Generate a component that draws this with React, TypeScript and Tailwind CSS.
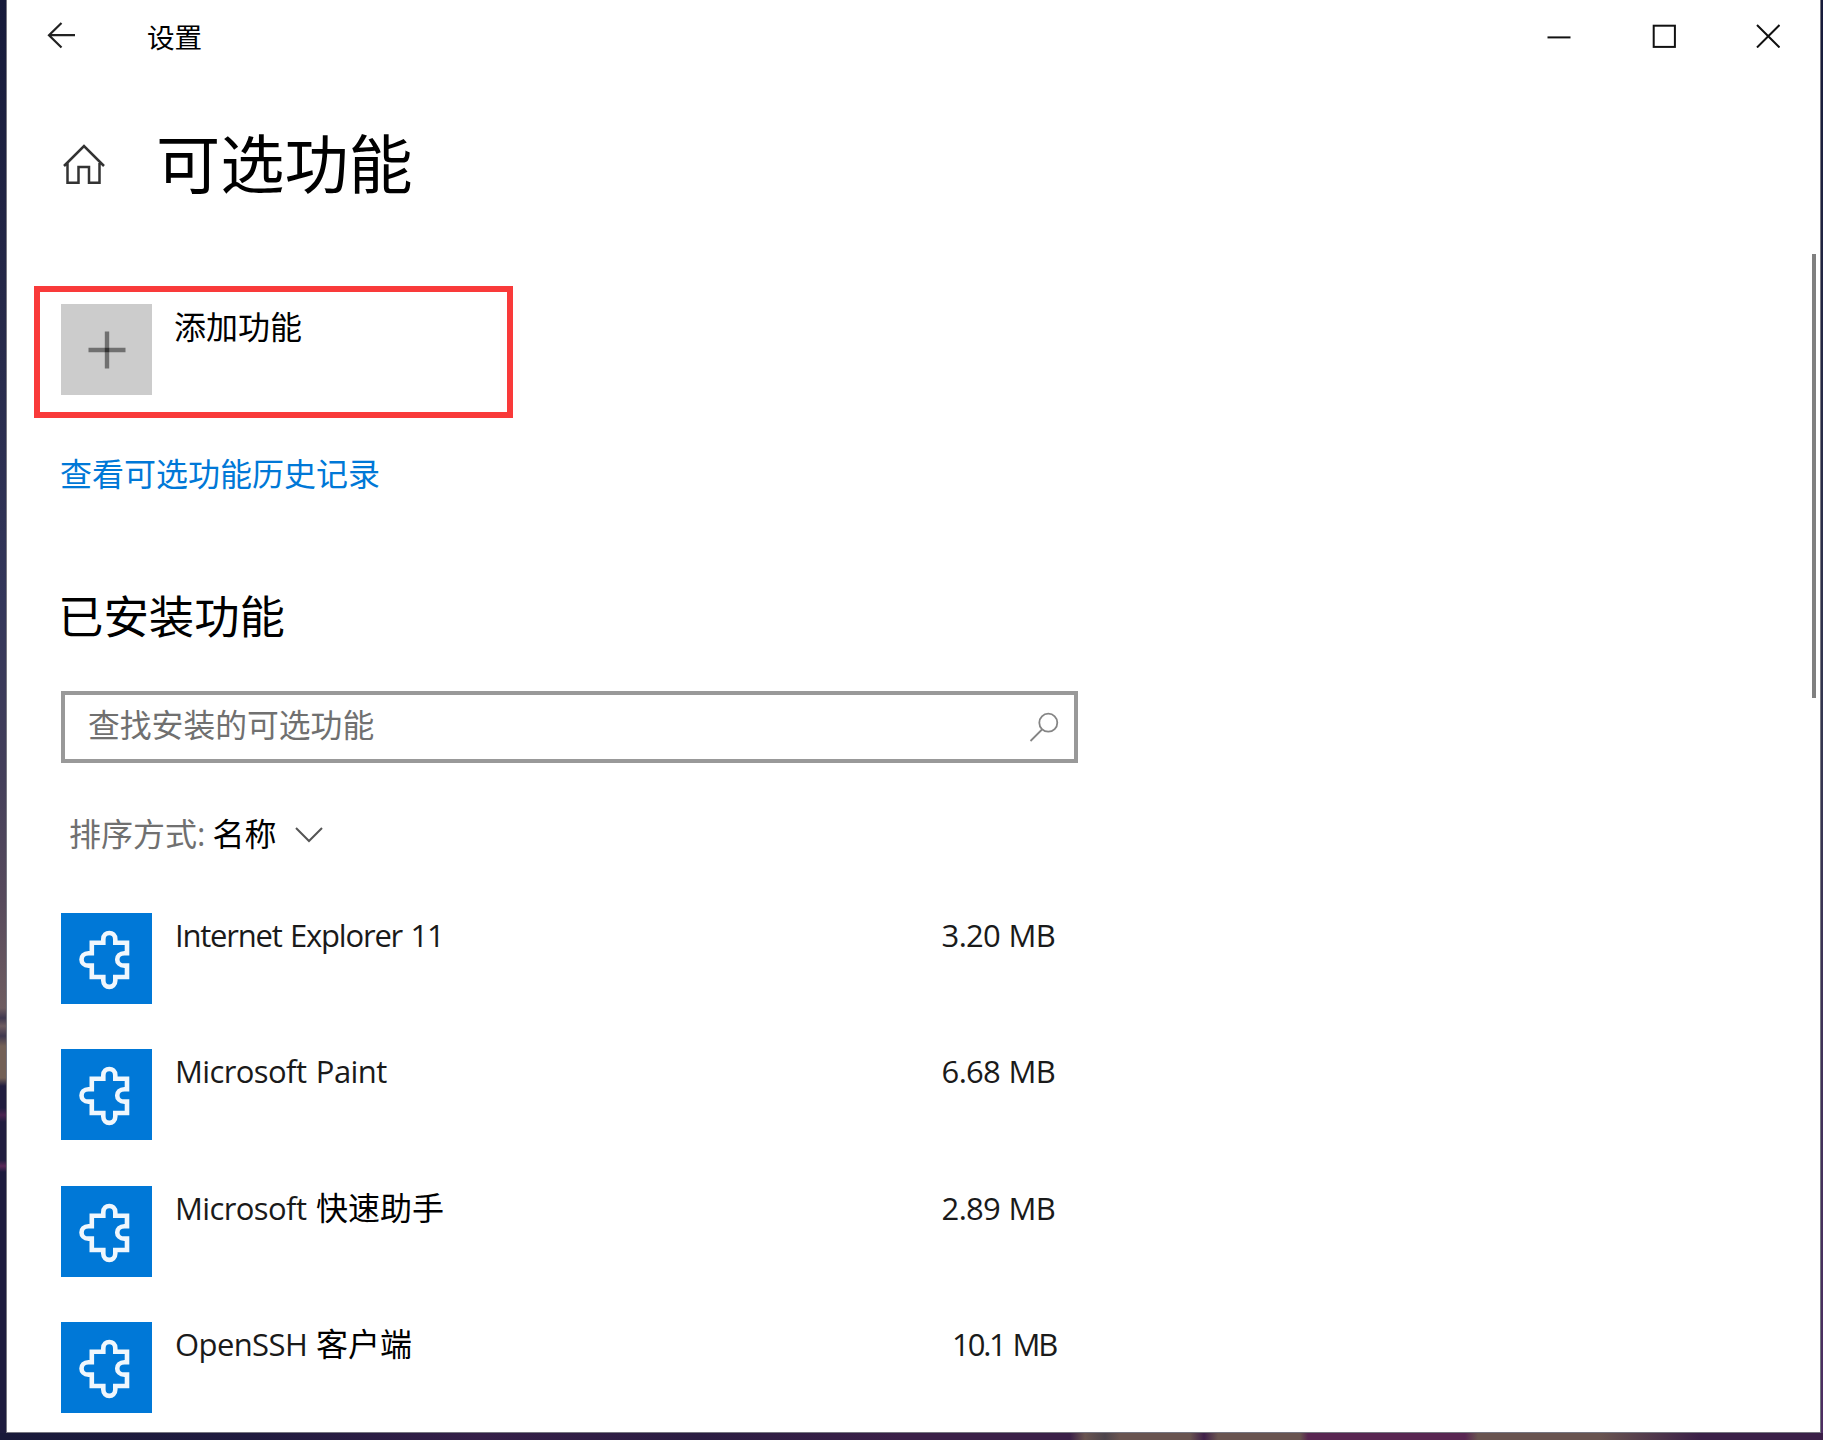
import React from 'react';

const features = [
  { name: 'Internet Explorer 11', cjk: '', size: '3.20 MB', nameClass: 'w-[270px] tracking-[-1.2px] [word-spacing:1.5px]', sizeClass: 'tracking-[-0.7px] [word-spacing:1px]' },
  { name: 'Microsoft Paint', cjk: '', size: '6.68 MB', nameClass: 'w-[214px] tracking-[-0.6px] [word-spacing:2px]', sizeClass: 'tracking-[-0.7px] [word-spacing:1px]' },
  { name: 'Microsoft', cjk: '快速助手', size: '2.89 MB', nameClass: 'w-[132px] tracking-[-0.6px]', sizeClass: 'tracking-[-0.7px] [word-spacing:1px]' },
  { name: 'OpenSSH', cjk: '客户端', size: '10.1 MB', nameClass: 'w-[132px] tracking-[-0.6px]', sizeClass: 'mr-[-1px] tracking-[-2.2px] [word-spacing:2px]' },
];

function PuzzleIcon() {
  return (
    <svg width="91" height="91" viewBox="0 0 91 91" fill="none" stroke="#f0f7fd" strokeWidth="4.6">
      <path d="M30.8 29.8H42.3V26.3C42.3 17.8 54.3 17.8 54.3 26.3V29.8H66V40.2H63.5C53.8 40.2 53.8 52.6 63.5 52.6H66V64H54.3V67.5C54.3 76 42.3 76 42.3 67.5V64H30.8V52.6H27.5C18.2 52.6 18.2 40.2 27.5 40.2H30.8Z" />
    </svg>
  );
}

function TitleBar() {
  return (
    <header className="flex h-[72px] items-start">
      <button className="mt-[22px] ml-10 h-7 w-7">
        <svg width="28" height="28" viewBox="0 0 28 28" fill="none" stroke="#222" strokeWidth="2.2">
          <path d="M28 13.2H2M14.5 1L2 13.2L14.5 25.5" />
        </svg>
      </button>
      <span className="mt-[17px] ml-[72px] text-[27.6px] leading-10 text-black">设置</span>
      <div className="mt-[24px] mr-[40px] ml-auto flex gap-[80.5px]">
        <svg width="24" height="24" viewBox="0 0 24 24" fill="none" stroke="#111" strokeWidth="2">
          <path d="M0.5 13.4H23.5" />
        </svg>
        <svg width="24" height="24" viewBox="0 0 24 24" fill="none" stroke="#111" strokeWidth="2">
          <rect x="1.7" y="1.7" width="21.2" height="21.2" />
        </svg>
        <svg width="24" height="24" viewBox="0 0 24 24" fill="none" stroke="#111" strokeWidth="2">
          <path d="M1 1L23.5 23.5M23.5 1L1 23.5" />
        </svg>
      </div>
    </header>
  );
}

export default function App() {
  return (
    <div className="h-[1440px] w-[1823px] overflow-hidden font-['Open_Sans','Noto_Sans_CJK_SC',sans-serif]">
      <div className="flex h-[1433px] bg-[linear-gradient(180deg,#161a3a,#343650_50%,#4d2d62)]">
        <div className="w-1.5 shrink-0 bg-[linear-gradient(180deg,#161a3a_0px,#252848_300px,#33365a_600px,#443f5a_780px,#574a5c_900px,#6e5c60_1008px,#40384f_1018px,#6e5c60_1026px,#40384f_1036px,#736056_1046px,#736056_1078px,#211d3f_1086px,#211d3f_1108px,#4b2350_1115px,#211d3f_1122px,#211d3f_1160px,#5a2858_1166px,#1d1b3e_1172px,#1d1b3e_1440px)]" />
        <main className="relative w-[1815px] shrink-0 border-r border-b border-l border-[#777781] bg-white">
          <TitleBar />

          <div className="flex h-[188px] items-start">
            <svg className="mt-[72px] ml-14" width="42" height="42" viewBox="0 0 42 42" fill="none" stroke="#333" strokeWidth="2.5">
              <path d="M1 22L21 2L41 22M4.5 19V38.8H15.5V23H26V38.8H36.5V19" />
            </svg>
            <h1 className="mt-[44.5px] ml-[51px] text-[64.2px] leading-[92px] text-black">可选功能</h1>
          </div>

          <section className="mt-[26px] ml-[27px] flex h-[132px] w-[479px] items-start border-[6.5px] border-[#f93a3a]">
            <div className="mt-[12px] ml-[21px] flex h-[91px] w-[91px] items-center justify-center bg-[#cccccc]">
              <svg width="38" height="38" viewBox="0 0 38 38" stroke="#707070" strokeWidth="4.4">
                <path d="M0.5 19H37.5" />
                <path d="M19 0.5V37.5" />
                <rect x="16.8" y="16.8" width="4.4" height="4.4" fill="#333" stroke="none" />
              </svg>
            </div>
            <span className="mt-[12px] ml-[22px] text-[32px] leading-[46px] text-black">添加功能</span>
          </section>

          <a className="mt-[33px] ml-[53px] block h-[47px] text-[32px] leading-[46px] text-[#0078d7]">查看可选功能历史记录</a>

          <h2 className="mt-[85px] ml-[51px] h-[67px] text-[45.4px] leading-[66px] text-black">已安装功能</h2>

          <div className="mt-[41px] ml-[54px] flex h-[72px] w-[1017px] items-start border-[4.5px] border-[#999999]">
            <span className="mt-[7px] ml-[23px] text-[31.8px] leading-[46px] text-[#707070]">查找安装的可选功能</span>
            <svg className="mt-[17px] mr-[15px] ml-auto" width="30" height="30" viewBox="0 0 30 30" fill="none" stroke="#858585" strokeWidth="1.8">
              <circle cx="19.3" cy="10.7" r="9" />
              <path d="M13 17.5L1.5 29" />
            </svg>
          </div>

          <div className="mt-[48px] ml-[62px] flex h-[46px] text-[32px] leading-[46px]">
            <span className="text-[#707070]">排序方式:</span>
            <span className="ml-[7px] text-black">名称</span>
            <svg className="mt-[16px] ml-[19px]" width="28" height="16" viewBox="0 0 28 16" fill="none" stroke="#555" strokeWidth="2">
              <path d="M1 1L14 14L27 1" />
            </svg>
          </div>

          <ul className="mt-[56px] ml-[54px] flex flex-col gap-[45.3px]">
            {features.map((f) => (
              <li key={f.size} className="flex h-[91px] w-[994px] items-start leading-[44px]">
                <div className="h-[91px] w-[91px] shrink-0 bg-[#0078d7]">
                  <PuzzleIcon />
                </div>
                <span className={`ml-[23px] shrink-0 text-[31px] whitespace-nowrap text-[#1a1a1a] ${f.nameClass}`}>{f.name}</span>
                {f.cjk && <span className="ml-[9px] text-[32px] text-black">{f.cjk}</span>}
                <span className={`ml-auto text-[31px] whitespace-nowrap text-[#1a1a1a] ${f.sizeClass}`}>{f.size}</span>
              </li>
            ))}
          </ul>

          <div className="absolute top-[254px] right-[4px] h-[444px] w-[4.5px] bg-[#808080]" />
        </main>
        <div className="grow" />
      </div>
      <div className="h-[7px] bg-[linear-gradient(90deg,#191a3a_0px,#201b3f_250px,#351f48_480px,#2b1d42_700px,#3b2048_900px,#3b2048_1070px,#695450_1085px,#4d454c_1105px,#695450_1120px,#695450_1190px,#40204a_1204px,#695450_1218px,#695450_1300px,#592652_1308px,#592652_1465px,#695450_1478px,#695450_1600px,#3b2048_1700px,#3b2048_1823px)]" />
    </div>
  );
}
